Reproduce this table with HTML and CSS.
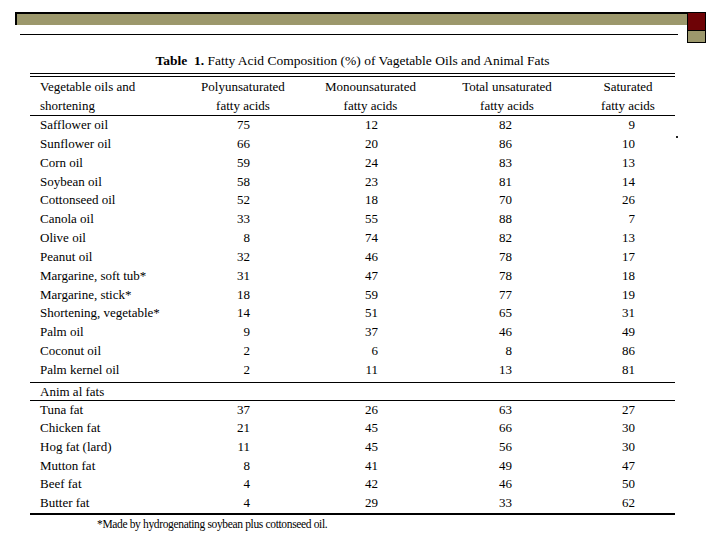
FILE: index.html
```html
<!DOCTYPE html>
<html>
<head>
<meta charset="utf-8">
<link rel="stylesheet" href="styles.css">
</head>
<body>
<div class="slide">
  <div class="topbar">
    <div class="topleft">
      <div class="bar"></div>
      <div class="thin"></div>
    </div>
    <div class="squares">
      <div class="sq-red"></div>
      <div class="sq-olive"></div>
    </div>
  </div>
  <div class="title"><b>Table&nbsp; 1.</b> Fatty Acid Composition (%) of Vagetable Oils and Animal Fats</div>
  <div class="dbl"></div>
  <table class="fa">
    <colgroup>
      <col class="c1"><col class="c2"><col class="c3"><col class="c4"><col class="c5">
    </colgroup>
    <thead>
      <tr>
        <th class="lbl">Vegetable oils and<br>shortening</th>
        <th>Polyunsaturated<br>fatty acids</th>
        <th>Monounsaturated<br>fatty acids</th>
        <th>Total unsaturated<br>fatty acids</th>
        <th class="h5">Saturated<br>fatty acids</th>
      </tr>
    </thead>
    <tbody class="veg">
      <tr><td class="lbl">Safflower oil</td><td class="n2">75</td><td class="n3">12</td><td class="n4">82</td><td class="n5">9</td></tr>
      <tr><td class="lbl">Sunflower oil</td><td class="n2">66</td><td class="n3">20</td><td class="n4">86</td><td class="n5">10</td></tr>
      <tr><td class="lbl">Corn oil</td><td class="n2">59</td><td class="n3">24</td><td class="n4">83</td><td class="n5">13</td></tr>
      <tr><td class="lbl">Soybean oil</td><td class="n2">58</td><td class="n3">23</td><td class="n4">81</td><td class="n5">14</td></tr>
      <tr><td class="lbl">Cottonseed oil</td><td class="n2">52</td><td class="n3">18</td><td class="n4">70</td><td class="n5">26</td></tr>
      <tr><td class="lbl">Canola oil</td><td class="n2">33</td><td class="n3">55</td><td class="n4">88</td><td class="n5">7</td></tr>
      <tr><td class="lbl">Olive oil</td><td class="n2">8</td><td class="n3">74</td><td class="n4">82</td><td class="n5">13</td></tr>
      <tr><td class="lbl">Peanut oil</td><td class="n2">32</td><td class="n3">46</td><td class="n4">78</td><td class="n5">17</td></tr>
      <tr><td class="lbl">Margarine, soft tub*</td><td class="n2">31</td><td class="n3">47</td><td class="n4">78</td><td class="n5">18</td></tr>
      <tr><td class="lbl">Margarine, stick*</td><td class="n2">18</td><td class="n3">59</td><td class="n4">77</td><td class="n5">19</td></tr>
      <tr><td class="lbl">Shortening, vegetable*</td><td class="n2">14</td><td class="n3">51</td><td class="n4">65</td><td class="n5">31</td></tr>
      <tr><td class="lbl">Palm oil</td><td class="n2">9</td><td class="n3">37</td><td class="n4">46</td><td class="n5">49</td></tr>
      <tr><td class="lbl">Coconut oil</td><td class="n2">2</td><td class="n3">6</td><td class="n4">8</td><td class="n5">86</td></tr>
      <tr class="last"><td class="lbl">Palm kernel oil</td><td class="n2">2</td><td class="n3">11</td><td class="n4">13</td><td class="n5">81</td></tr>
    </tbody>
    <tbody class="sect">
      <tr><td class="lbl">Anim al fats</td><td></td><td></td><td></td><td></td></tr>
    </tbody>
    <tbody class="ani">
      <tr><td class="lbl">Tuna fat</td><td class="n2">37</td><td class="n3">26</td><td class="n4">63</td><td class="n5">27</td></tr>
      <tr><td class="lbl">Chicken fat</td><td class="n2">21</td><td class="n3">45</td><td class="n4">66</td><td class="n5">30</td></tr>
      <tr><td class="lbl">Hog fat (lard)</td><td class="n2">11</td><td class="n3">45</td><td class="n4">56</td><td class="n5">30</td></tr>
      <tr><td class="lbl">Mutton fat</td><td class="n2">8</td><td class="n3">41</td><td class="n4">49</td><td class="n5">47</td></tr>
      <tr><td class="lbl">Beef fat</td><td class="n2">4</td><td class="n3">42</td><td class="n4">46</td><td class="n5">50</td></tr>
      <tr class="last"><td class="lbl">Butter fat</td><td class="n2">4</td><td class="n3">29</td><td class="n4">33</td><td class="n5">62</td></tr>
    </tbody>
  </table>
  <div class="note">*Made by hydrogenating soybean plus cottonseed oil.</div>
  <span class="speck"></span>
</div>
</body>
</html>
```
FILE: styles.css
```css
html, body {
  margin: 0;
  padding: 0;
  background: #ffffff;
}
.slide {
  position: relative;
  width: 720px;
  height: 540px;
  overflow: hidden;
  font-family: "Liberation Serif", "Times New Roman", serif;
  color: #000000;
}
.topbar {
  display: flex;
  align-items: flex-start;
  padding: 12px 0 0 15px;
  height: 30px;
}
.topleft {
  width: 672px;
}
.bar {
  height: 11px;
  background: #9c986c;
  border-top: 2px solid #000;
  border-left: 2px solid #000;
}
.thin {
  margin: 9px 0 0 5px;
  width: 658px;
  height: 1px;
  background: #000;
}
.squares {
  width: 17px;
  border: 1px solid #000;
}
.sq-red {
  height: 17px;
  background: #6e0306;
  border-bottom: 1px solid #000;
}
.sq-olive {
  height: 11px;
  background: #9c986c;
}
.title {
  width: 645px;
  margin: 11px 0 0 30px;
  text-align: center;
  font-size: 13.5px;
  line-height: 16px;
}
.title b {
  font-weight: bold;
}
.dbl {
  margin: 4px 0 0 30px;
  width: 645px;
  height: 2px;
  border-top: 1px solid #000;
  border-bottom: 1px solid #000;
}
.fa {
  margin-left: 30px;
  width: 645px;
  table-layout: fixed;
  border-collapse: collapse;
  font-size: 13px;
}
.c1 { width: 155px; }
.c2 { width: 116px; }
.c3 { width: 139px; }
.c4 { width: 134px; }
.c5 { width: 101px; }
.fa th {
  font-weight: normal;
  text-align: center;
  line-height: 19px;
  padding: 0;
  white-space: nowrap;
  border-bottom: 1px solid #000;
}
.fa th.lbl, .fa td.lbl {
  text-align: left;
  padding-left: 10px;
  white-space: nowrap;
}
.fa th.h5 {
  padding-left: 7px;
}
.fa td {
  padding: 0;
  line-height: 18.85px;
}
.fa .n2 { text-align: right; padding-right: 51px; }
.fa .n3 { text-align: right; padding-right: 62px; }
.fa .n4 { text-align: right; padding-right: 62px; }
.fa .n5 { text-align: right; padding-right: 40px; }
.veg tr.last td {
  padding-bottom: 2px;
  border-bottom: 1px solid #000;
}
.sect td {
  line-height: 17px;
  border-bottom: 1px solid #000;
}
.ani td {
  line-height: 18.6px;
}
.ani tr.last td {
  padding-bottom: 1px;
  border-bottom: 2px solid #000;
}
.note {
  margin: 2px 0 0 97px;
  font-size: 11.5px;
  letter-spacing: -0.35px;
  line-height: 15px;
}
.speck {
  position: absolute;
  left: 676px;
  top: 136px;
  width: 2px;
  height: 2px;
  background: #222;
}
```
